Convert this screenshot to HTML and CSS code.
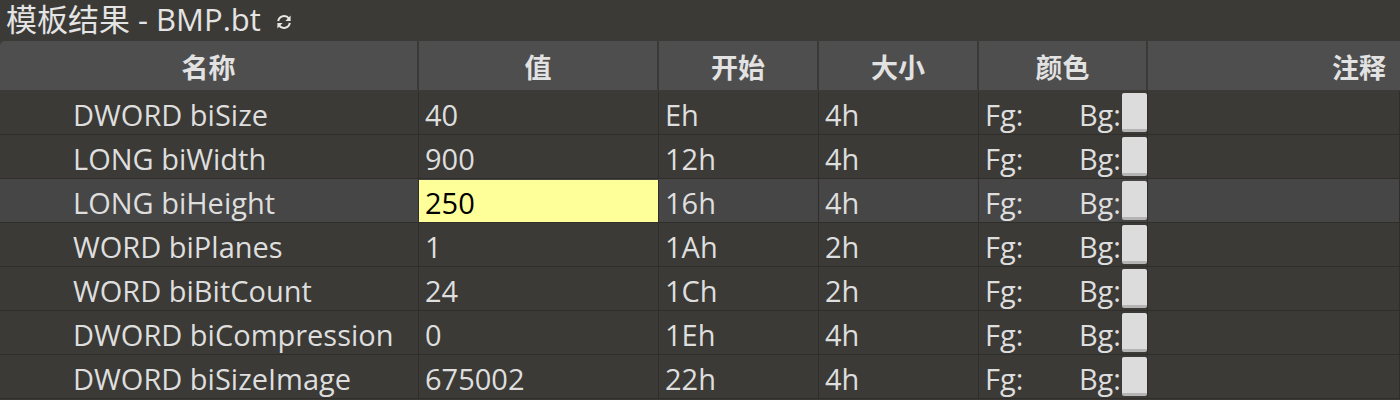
FILE: index.html
```html
<!DOCTYPE html>
<html>
<head>
<meta charset="utf-8">
<link rel="stylesheet" href="styles.css">
</head>
<body>
<div class="panel">
  <div class="title">
    <span>模板结果 - BMP.bt</span>
    <svg class="refresh" width="18" height="18" viewBox="0 0 18 18">
      <path d="M3.2 8.2 A6 6 0 0 1 14 5.6" fill="none" stroke="#e6e6e6" stroke-width="2"/>
      <path d="M15.6 2.6 L15.6 8 L10.4 8 Z" fill="#e6e6e6"/>
      <path d="M14.8 9.8 A6 6 0 0 1 4 12.4" fill="none" stroke="#e6e6e6" stroke-width="2"/>
      <path d="M2.4 15.4 L2.4 10 L7.6 10 Z" fill="#e6e6e6"/>
    </svg>
  </div>
  <div class="table">
    <div class="row head">
      <div class="cell c1">名称</div>
      <div class="cell c2">值</div>
      <div class="cell c3">开始</div>
      <div class="cell c4">大小</div>
      <div class="cell c5">颜色</div>
      <div class="cell c6">注释</div>
    </div>
    <div class="row">
      <div class="cell c1">DWORD biSize</div>
      <div class="cell c2">40</div>
      <div class="cell c3">Eh</div>
      <div class="cell c4">4h</div>
      <div class="cell c5"><span class="fg">Fg:</span><span class="bg">Bg:</span><span class="swatch"></span></div>
      <div class="cell c6"></div>
    </div>
    <div class="row">
      <div class="cell c1">LONG biWidth</div>
      <div class="cell c2">900</div>
      <div class="cell c3">12h</div>
      <div class="cell c4">4h</div>
      <div class="cell c5"><span class="fg">Fg:</span><span class="bg">Bg:</span><span class="swatch"></span></div>
      <div class="cell c6"></div>
    </div>
    <div class="row sel">
      <div class="cell c1">LONG biHeight</div>
      <div class="cell c2 edit">250</div>
      <div class="cell c3">16h</div>
      <div class="cell c4">4h</div>
      <div class="cell c5"><span class="fg">Fg:</span><span class="bg">Bg:</span><span class="swatch"></span></div>
      <div class="cell c6"></div>
    </div>
    <div class="row">
      <div class="cell c1">WORD biPlanes</div>
      <div class="cell c2">1</div>
      <div class="cell c3">1Ah</div>
      <div class="cell c4">2h</div>
      <div class="cell c5"><span class="fg">Fg:</span><span class="bg">Bg:</span><span class="swatch"></span></div>
      <div class="cell c6"></div>
    </div>
    <div class="row">
      <div class="cell c1">WORD biBitCount</div>
      <div class="cell c2">24</div>
      <div class="cell c3">1Ch</div>
      <div class="cell c4">2h</div>
      <div class="cell c5"><span class="fg">Fg:</span><span class="bg">Bg:</span><span class="swatch"></span></div>
      <div class="cell c6"></div>
    </div>
    <div class="row">
      <div class="cell c1">DWORD biCompression</div>
      <div class="cell c2">0</div>
      <div class="cell c3">1Eh</div>
      <div class="cell c4">4h</div>
      <div class="cell c5"><span class="fg">Fg:</span><span class="bg">Bg:</span><span class="swatch"></span></div>
      <div class="cell c6"></div>
    </div>
    <div class="row">
      <div class="cell c1">DWORD biSizeImage</div>
      <div class="cell c2">675002</div>
      <div class="cell c3">22h</div>
      <div class="cell c4">4h</div>
      <div class="cell c5"><span class="fg">Fg:</span><span class="bg">Bg:</span><span class="swatch"></span></div>
      <div class="cell c6"></div>
    </div>
  </div>
</div>
</body>
</html>
```
FILE: styles.css
```css
html, body {
  margin: 0;
  padding: 0;
  background: #3b3a36;
  height: 400px;
  overflow: hidden;
}
.panel {
  font-family: "Open Sans", "Noto Sans", "Noto Sans CJK SC", sans-serif;
  color: #dedede;
}
.title {
  height: 41px;
  display: flex;
  align-items: center;
  padding-left: 6px;
  font-size: 31px;
  font-family: "Open Sans", "Noto Sans CJK SC", sans-serif;
  color: #e4e4e4;
}
.title span {
  line-height: 1;
  padding-bottom: 2px;
}
.refresh {
  margin-left: 14px;
  margin-top: 2px;
}
.table {
  display: flex;
  flex-direction: column;
}
.row {
  display: grid;
  grid-template-columns: 419px 240px 160px 160px 169px 1fr;
  height: 44px;
  border-bottom: 1px solid #2f2e2b;
  box-sizing: border-box;
}
.row.head {
  height: 50px;
  background: #4e4e4e;
  border-top-left-radius: 5px;
  border-bottom: 1px solid #3b3a36;
}
.cell {
  border-right: 1px solid #2f2e2b;
  display: flex;
  align-items: center;
  font-size: 29px;
  white-space: nowrap;
  overflow: hidden;
  box-sizing: border-box;
  padding-left: 6px;
  padding-top: 3px;
}
.row .c1 {
  padding-left: 73px;
}
.head .cell {
  justify-content: center;
  padding-left: 0;
  padding-top: 1px;
  font-weight: bold;
  font-size: 27px;
  font-family: "Noto Sans CJK SC", sans-serif;
  color: #e2e2e2;
  border-right: 2px solid #3b3a36;
}
.head .c6 {
  justify-content: flex-end;
  padding-right: 14px;
  border-right: none;
}
.row.sel {
  background: #464646;
}
.cell.edit {
  background: #ffff99;
  color: #000;
  margin-top: 1px;
}
.c5 .fg {
  flex: 1;
}
.swatch {
  width: 25px;
  height: 39px;
  background: #dcdcdc;
  border-bottom: 3px solid #b4b4b4;
  border-radius: 2px;
  box-sizing: border-box;
  margin-left: 1px;
  margin-top: -3px;
}
```
